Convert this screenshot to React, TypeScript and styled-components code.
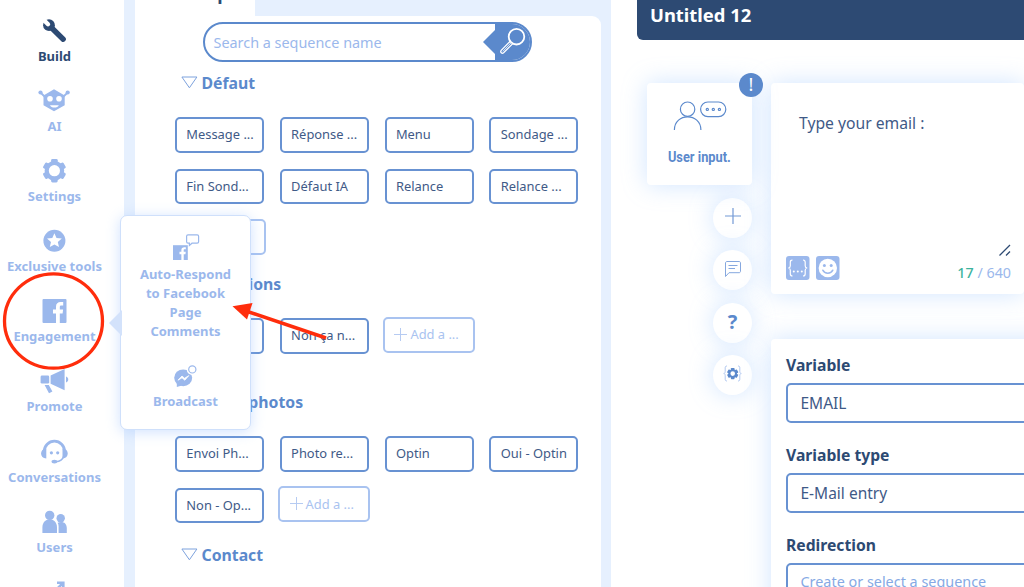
import React from "react";
import styled, { createGlobalStyle, css } from "styled-components";

const c = {
  navy: "#2d4a73",
  text: "#3f5a87",
  blue: "#5b89cc",
  line: "#6892d2",
  soft: "#9bb8ec",
  pale: "#e6f0fe",
  red: "#ff2d0c",
};

const GlobalStyle = createGlobalStyle`
  * { box-sizing: border-box; }
  body { margin: 0; background: #fff; font-family: "Noto Sans", "Open Sans", sans-serif; overflow: hidden; }
`;

const Page = styled.div`
  position: relative;
  display: flex;
  width: 1024px;
  height: 587px;
  overflow: hidden;
  background: #fff;
`;

/* ---------- Sidebar ---------- */

const Sidebar = styled.nav`
  display: flex;
  flex: 0 0 124px;
  flex-direction: column;
  align-items: center;
  padding: 18px 15px 0 0;
`;

const NavItem = styled.a<{ $active?: boolean }>`
  display: flex;
  flex: 0 0 70.1px;
  flex-direction: column;
  align-items: center;
  gap: 5px;
  color: ${(p) => (p.$active ? c.navy : c.soft)};
  font-size: 13px;
  font-weight: 700;
  line-height: 19px;
  white-space: nowrap;
`;

const NavGlyph = styled.svg`
  display: block;
  flex: none;
  width: 32px;
  height: 24px;
  margin-right: 1px;
  overflow: visible;
  fill: currentColor;
`;

/* ---------- Sequences ---------- */

const Sequences = styled.section`
  display: flex;
  flex: 0 0 487px;
  flex-direction: column;
  padding: 0 10.5px;
  background: ${c.pale};
`;

const Tab = styled.div`
  display: flex;
  flex: 0 0 33px;
  align-items: flex-start;
  justify-content: center;
  width: 120px;
  margin-top: -17px;
  padding-right: 7px;
  background: #fff;
  color: ${c.navy};
  font-size: 18px;
  font-weight: 700;
  line-height: 20px;
`;

const Panel = styled.div`
  flex: 1;
  padding: 6px 0 0 40.5px;
  border-radius: 0 9px 0 0;
  background: #fff;
`;

const Search = styled.div`
  display: flex;
  width: 329px;
  height: 39.5px;
  margin-left: 28px;
  overflow: hidden;
  border: 2px solid ${c.blue};
  border-radius: 20px;
`;

const SearchText = styled.span`
  flex: 1;
  padding-left: 8.5px;
  color: ${c.soft};
  font-size: 14.4px;
  line-height: 37px;
`;

const SearchButton = styled.span`
  position: relative;
  flex: 0 0 35px;
  background: ${c.blue};
  &::before {
    content: "";
    position: absolute;
    top: 4.5px;
    left: -12.5px;
    border: 13px solid transparent;
    border-right-color: ${c.blue};
    border-left: 0;
  }
  svg { position: relative; display: block; }
`;

const SectionList = styled.div`
  display: grid;
  grid-template-rows: 201px 118px 153px 44px;
  padding-top: 9.5px;
`;

const SectionHead = styled.h3`
  display: flex;
  align-items: center;
  gap: 4px;
  height: 24px;
  margin: 0 0 22px 5.5px;
  color: ${c.blue};
  font-size: 15.8px;
  font-weight: 700;
  svg { display: block; margin-top: -1px; }
`;

const Chips = styled.div`
  display: grid;
  grid-template-columns: repeat(4, 89px);
  grid-auto-rows: 35.5px;
  gap: 16px 15.8px;
`;

const Chip = styled.div<{ $add?: boolean }>`
  display: flex;
  align-items: center;
  padding: 0 0 1px 9.3px;
  border: 2px solid ${c.line};
  border-radius: 5px;
  color: ${c.text};
  font-size: 12.9px;
  white-space: nowrap;
  ${(p) =>
    p.$add &&
    css`
      width: 92px;
      height: 36px;
      margin: -1.5px 0 0 -1.5px;
      gap: 3px;
      border-color: #a9c3f0;
      color: #a9c3f0;
    `}
`;

/* ---------- Editor ---------- */

const Editor = styled.main`
  display: flex;
  flex: 1;
  flex-direction: column;
  min-width: 0;
`;

const TitleBar = styled.header`
  flex: 0 0 39.5px;
  margin-left: 26px;
  padding-left: 13px;
  border-radius: 0 0 0 6px;
  background: ${c.navy};
  color: #fff;
  font-size: 18.4px;
  font-weight: 700;
  line-height: 30px;
`;

const Workspace = styled.div`
  display: flex;
  gap: 19px;
  padding: 43.5px 0 0 36px;
`;

const Rail = styled.div`
  display: flex;
  flex: 0 0 105px;
  flex-direction: column;
  align-items: flex-end;
  gap: 12.5px;
`;

const glow = css`
  box-shadow: 0 0 24px rgba(140, 190, 255, 0.4);
`;

const InputCard = styled.div`
  position: relative;
  display: flex;
  flex-direction: column;
  align-items: center;
  width: 105px;
  height: 102px;
  padding-top: 17px;
  border-radius: 4px;
  background: #fff;
  ${glow}
`;

const InputLabel = styled.span`
  margin-top: 16px;
  color: ${c.blue};
  font-family: Roboto, sans-serif;
  font-size: 14px;
  font-weight: 700;
  line-height: 18px;
  white-space: nowrap;
  transform: scaleX(0.915);
`;

const Badge = styled.span`
  position: absolute;
  top: -10px;
  right: -11px;
  width: 24px;
  height: 24px;
  border-radius: 50%;
  background: ${c.blue};
  color: #fff;
  font-size: 18px;
  line-height: 23px;
  text-align: center;
`;

const RoundButton = styled.span`
  display: flex;
  align-items: center;
  justify-content: center;
  width: 39px;
  height: 40px;
  padding-bottom: 3px;
  border-radius: 50%;
  background: #fff;
  color: ${c.blue};
  font-size: 20px;
  font-weight: 700;
  ${glow}
`;

const Cards = styled.div`
  display: flex;
  flex: 0 0 253px;
  flex-direction: column;
  gap: 45px;
  min-width: 0;
`;

const MessageCard = styled.div`
  display: flex;
  flex-direction: column;
  justify-content: space-between;
  height: 210.5px;
  padding: 28px 13px 11px 15px;
  border-radius: 4px;
  background: #fff;
  ${glow}
`;

const MessageText = styled.div`
  padding-left: 13px;
  color: ${c.text};
  font-size: 15.7px;
  line-height: 24px;
`;

const MessageFoot = styled.div`
  display: flex;
  align-items: flex-end;
  justify-content: space-between;
`;

const Tools = styled.div`
  display: flex;
  gap: 6px;
  padding-bottom: 3px;
  svg { display: block; }
`;

const CounterBox = styled.div`
  display: flex;
  flex-direction: column;
  align-items: flex-end;
  gap: 7px;
`;

const Counter = styled.span`
  color: ${c.soft};
  font-size: 14.3px;
  line-height: 20px;
  white-space: nowrap;
  b { color: #3db39e; font-weight: 500; }
`;

const FormCard = styled.div`
  display: grid;
  grid-auto-rows: 90px;
  width: 300px;
  padding: 14.5px 15px;
  border-radius: 4px;
  background: #fff;
  ${glow}
`;

const FieldLabel = styled.div`
  height: 24px;
  margin-bottom: 6px;
  color: ${c.navy};
  font-size: 15.7px;
  font-weight: 700;
  line-height: 24px;
`;

const Field = styled.div<{ $empty?: boolean }>`
  height: 40px;
  padding-left: 12.5px;
  border: 2px solid ${c.line};
  border-radius: 5px;
  color: ${(p) => (p.$empty ? "#86a9e4" : c.text)};
  font-size: ${(p) => (p.$empty ? 14.4 : 15.5)}px;
  line-height: ${(p) => (p.$empty ? 34 : 37)}px;
  white-space: nowrap;
`;

/* ---------- Flyout menu ---------- */

const Flyout = styled.div`
  position: absolute;
  top: 215px;
  left: 120px;
  display: flex;
  flex-direction: column;
  align-items: center;
  width: 131px;
  height: 215px;
  padding-top: 17px;
  border: 1.5px solid #cfe0fb;
  border-radius: 7px;
  background: #fff;
  box-shadow: 0 2px 14px rgba(150, 190, 255, 0.45);
  &::before {
    content: "";
    position: absolute;
    top: 94px;
    left: -12px;
    border: 13.5px solid transparent;
    border-right: 13px solid #d3e2fb;
    border-left: 0;
  }
`;

const FlyoutItem = styled.div`
  display: flex;
  flex-direction: column;
  align-items: center;
  width: 104px;
  margin-bottom: 23px;
  color: ${c.soft};
  font-size: 13px;
  font-weight: 700;
  line-height: 19px;
  text-align: center;
  svg { display: block; margin-bottom: 3px; }
`;

const Annotations = styled.svg`
  position: absolute;
  top: 0;
  left: 0;
  pointer-events: none;
`;

/* ---------- Icons ---------- */

const WrenchIcon = () => (
  <NavGlyph viewBox="0 0 32 24">
    <path d="m12 8.300 13.200 12.900" stroke="currentColor" strokeWidth="5.400" strokeLinecap="round" />
    <circle cx="11" cy="7.200" r="5.900" />
    <path d="m4.500.700 5.500 5.500" stroke="#fff" strokeWidth="4.400" strokeLinecap="round" />
  </NavGlyph>
);

const RobotIcon = () => (
  <NavGlyph viewBox="0 0 32 24">
    <path d="M16 1.300 26.700 7.500v9.800L16 23.300 5.500 17.300V7.500z" />
    <path d="M2.500 4.500 7 9M29.700 4.500 25 9" stroke="currentColor" strokeWidth="1.800" />
    <circle cx="2.500" cy="4.500" r="2.100" />
    <circle cx="29.700" cy="4.500" r="2.100" />
    <g fill="#fff">
      <circle cx="12" cy="10.800" r="2.800" />
      <circle cx="21" cy="10.800" r="2.800" />
      <path d="M12 17.200h8.800c-1 3.200-7.800 3.200-8.800 0z" />
    </g>
  </NavGlyph>
);

const GearIcon = () => (
  <NavGlyph viewBox="0 0 32 24">
    {[0, 60, 120].map((a) => (
      <rect key={a} x="13.100" y="0.900" width="6.600" height="23.600" rx="1.400" transform={`rotate(${a} 16.400 12.700)`} />
    ))}
    <circle cx="16.400" cy="12.700" r="9.800" />
    <circle cx="16.400" cy="12.700" r="5.600" fill="#fff" />
  </NavGlyph>
);

const StarIcon = () => (
  <NavGlyph viewBox="0 0 32 24">
    <circle cx="16.400" cy="12.700" r="11" />
    <path fill="#fff" d="m16.400 5.200 2.100 4.800 5.300.5-4 3.500 1.200 5.100-4.600-2.700-4.600 2.700 1.200-5.100-4-3.500 5.300-.5z" />
  </NavGlyph>
);

const fLetter =
  "M18 25v-9.600h-3v-3.900h3V8.700c0-3 1.900-4.600 4.600-4.600h2.600v3.500h-1.900c-1.200 0-1.500.6-1.500 1.600v2.300h3.300l-.5 3.900h-2.800V25z";

const FacebookIcon = () => (
  <NavGlyph viewBox="0 0 32 24">
    <rect x="4.500" y="1" width="24" height="24" rx="1" />
    <path fill="#fff" d={fLetter} />
  </NavGlyph>
);

const MegaphoneIcon = () => (
  <NavGlyph viewBox="0 0 32 24">
    <rect x="2.600" y="7.600" width="8.600" height="8" rx="1.400" />
    <path d="m12.600 7.600 14-6.600v21.200l-14-6.400zM28 8.600c3 .8 3 5.200 0 6zM6.600 17h4.200l3.600 6.400-3.400 1.800z" />
  </NavGlyph>
);

const HeadsetIcon = () => (
  <NavGlyph viewBox="0 0 32 24">
    <path d="M6.200 12.500a10.200 10.400 0 0 1 20.400 0" fill="none" stroke="currentColor" strokeWidth="2.800" />
    <path d="M8.300 9.400v10c-7 0-7-10 0-10zM24.500 9.400v10c7 0 7-10 0-10z" />
    <path d="M25.800 17c-1 3.400-4 5.500-8 5.700" fill="none" stroke="currentColor" strokeWidth="1.500" />
    <ellipse cx="16.400" cy="22.600" rx="2.900" ry="1.900" />
    <circle cx="13.400" cy="13.800" r="1.600" />
    <circle cx="19.700" cy="13.800" r="1.600" />
  </NavGlyph>
);

const UsersIcon = () => (
  <NavGlyph viewBox="0 0 32 24">
    <circle cx="11.700" cy="6.400" r="4.700" />
    <path d="M4.400 24v-5.500c0-11 14.600-11 14.600 0V24z" />
    <circle cx="22.700" cy="9.300" r="4.200" />
    <path d="M20.600 24v-6.500c0-1.400-.3-2.700-1-3.800 4.600-2 9.200-.2 9.200 5.300v5z" />
  </NavGlyph>
);

const TrendIcon = () => (
  <NavGlyph viewBox="0 0 32 24">
    <path d="M19 3.700h6.300v6.300M25 4 12 17" fill="none" stroke="currentColor" strokeWidth="2.600" />
  </NavGlyph>
);

const SearchIcon = () => (
  <svg width="35" height="36" viewBox="0 0 35 36" fill="none" stroke="#fff">
    <circle cx="21.500" cy="12.700" r="7.800" strokeWidth="1.800" />
    <path d="m15.200 17.200-9 9.200c-1.400 2 .8 3.700 2.400 2.400l9.200-9.200" strokeWidth="1.300" />
    <path d="m7.800 27.400 8.200-8.600" strokeWidth=".8" />
  </svg>
);

const Triangle = () => (
  <svg width="17" height="13" viewBox="0 0 17 13" fill="none" stroke="#7da2dd">
    <path d="M.9 1h15L8.400 11.800z" />
  </svg>
);

const Plus = ({ size = 13, color = "#b4caf2" }: { size?: number; color?: string }) => (
  <svg width={size} height={size} viewBox="0 0 16 16" stroke={color} strokeWidth="1.200">
    <path d="M8 0v16M0 8h16" />
  </svg>
);

const UserInputIcon = () => (
  <svg width="54" height="32" viewBox="673 100 54 32" fill="none" stroke={c.blue} strokeWidth="1.200">
    <circle cx="687.600" cy="109.200" r="7.200" />
    <path d="M674.400 130c0-17.500 26.500-17.500 26.500 0" />
    <rect x="700.600" y="102" width="25.200" height="14.600" rx="7.300" />
    <circle cx="707.300" cy="109.400" r="1.100" />
    <circle cx="713.300" cy="109.400" r="1.100" />
    <circle cx="719.400" cy="109.400" r="1.100" />
  </svg>
);

const CommentIcon = () => (
  <svg width="18" height="18" viewBox="0 0 18 18" fill="none" stroke="#86a8df" strokeWidth="1">
    <path d="M1.500 16.500V3c0-1 .7-1.500 1.500-1.500h12c1 0 1.500.6 1.500 1.500v8.200c0 1-.6 1.500-1.500 1.500H5zM4.500 5.500h9M4.500 8.500h6.500" />
  </svg>
);

const BraceGearIcon = () => (
  <svg width="19" height="17" viewBox="0 0 19 17" fill="none">
    <path
      d="M4 1C2.400 1 2.200 1.800 2.200 3v3.300c0 1.300-.3 1.900-1.400 2.200 1.100.3 1.400.9 1.400 2.200V14c0 1.200.2 2 1.800 2M15 1c1.600 0 1.800.8 1.800 2v3.300c0 1.300.3 1.900 1.400 2.200-1.100.3-1.400.9-1.400 2.200V14c0 1.200-.2 2-1.800 2"
      stroke="#a9c3ee"
      strokeWidth=".9"
    />
    <g fill={c.blue}>
      {[0, 60, 120].map((a) => (
        <rect key={a} x="7.900" y="3" width="3.600" height="11.200" rx=".6" transform={`rotate(${a} 9.700 8.600)`} />
      ))}
    </g>
    <circle cx="9.700" cy="8.600" r="3.300" stroke={c.blue} strokeWidth="2" fill="#fff" />
  </svg>
);

const BracesIcon = () => (
  <svg width="24" height="24" viewBox="0 0 24 24" fill="none">
    <rect width="23.500" height="24" rx="3" fill={c.soft} />
    <path
      d="M6.500 4C4.500 4 4.300 4.800 4.300 6.300v3.400c0 1.400-.5 2-1.900 2.300 1.400.3 1.900.9 1.900 2.300v3.400c0 1.500.2 2.300 2.200 2.300M17 4c2 0 2.200.8 2.200 2.300v3.400c0 1.400.5 2 1.900 2.300-1.400.3-1.900.9-1.900 2.300v3.400c0 1.500-.2 2.300-2.200 2.300"
      stroke="#fff"
      strokeWidth="1.200"
    />
    <g fill="#fff">
      <circle cx="7.800" cy="15.400" r="1" />
      <circle cx="11.800" cy="15.400" r="1" />
      <circle cx="15.800" cy="15.400" r="1" />
    </g>
  </svg>
);

const SmileIcon = () => (
  <svg width="24" height="24" viewBox="0 0 24 24" fill={c.soft}>
    <rect width="23.500" height="24" rx="3" />
    <circle cx="11.800" cy="12" r="9.200" fill="#fff" />
    <circle cx="8.400" cy="9.600" r="1.500" />
    <circle cx="15.200" cy="9.600" r="1.500" />
    <path d="M6.800 14.200c2 4 8 4 10 0" fill="none" stroke={c.soft} strokeWidth="1.500" strokeLinecap="round" />
  </svg>
);

const ResizeMark = () => (
  <svg width="12" height="12" viewBox="0 0 12 12" stroke={c.navy} strokeWidth="1.300">
    <path d="M.5 11.500 11 1M7 11.500 11 7.500" />
  </svg>
);

const AutoRespondIcon = () => (
  <svg width="28" height="29" viewBox="172 233 28 29" fill="currentColor">
    <rect x="173" y="245.200" width="14.800" height="14.800" />
    <g transform="translate(170.200 244.600) scale(.62)">
      <path fill="#fff" d={fLetter} />
    </g>
    <path
      d="M188 234.800h9.200c.9 0 1.400.5 1.400 1.400v5.600c0 .9-.5 1.400-1.400 1.400h-5.200l-2.600 2.300v-2.300H188c-.9 0-1.400-.5-1.400-1.400v-5.600c0-.9.5-1.400 1.400-1.400z"
      fill="#fff"
      stroke="currentColor"
      strokeWidth="1.200"
    />
  </svg>
);

const BroadcastIcon = () => (
  <svg width="28" height="25" viewBox="172 363 28 25" fill="currentColor">
    <ellipse cx="183.200" cy="376.800" rx="9" ry="8.400" />
    <path d="M176.800 381v5l5-1.600z" />
    <path d="m178 379.200 4-4.200 2.600 2.300 4.200-2.700-4 4.600-2.800-2.400z" fill="#fff" stroke="#fff" strokeWidth=".8" />
    <circle cx="192.300" cy="368.400" r="5.600" fill="#fff" />
    <circle cx="192.300" cy="368.400" r="3.600" fill="#fff" stroke="currentColor" strokeWidth="1.200" />
  </svg>
);

/* ---------- Content ---------- */

const navItems: { label: string; icon: React.ReactNode; active?: boolean }[] = [
  { label: "Build", icon: <WrenchIcon />, active: true },
  { label: "AI", icon: <RobotIcon /> },
  { label: "Settings", icon: <GearIcon /> },
  { label: "Exclusive tools", icon: <StarIcon /> },
  { label: "Engagement", icon: <FacebookIcon /> },
  { label: "Promote", icon: <MegaphoneIcon /> },
  { label: "Conversations", icon: <HeadsetIcon /> },
  { label: "Users", icon: <UsersIcon /> },
  { label: "", icon: <TrendIcon /> },
];

const ADD = "Add a ...";

const sections = [
  {
    title: "Défaut",
    chips: ["Message ...", "Réponse ...", "Menu", "Sondage ...", "Fin Sond...", "Défaut IA", "Relance", "Relance ...", ADD],
  },
  { title: "Questions", chips: ["Oui ça ...", "Non ça n...", ADD] },
  { title: "Envoi photos", chips: ["Envoi Ph...", "Photo re...", "Optin", "Oui - Optin", "Non - Op...", ADD] },
  { title: "Contact", chips: [] },
];

export default function App() {
  return (
    <Page>
      <GlobalStyle />
      <Sidebar>
        {navItems.map((item, i) => (
          <NavItem key={i} $active={item.active}>
            {item.icon}
            {item.label}
          </NavItem>
        ))}
      </Sidebar>

      <Sequences>
        <Tab>Bot map</Tab>
        <Panel>
          <Search>
            <SearchText>Search a sequence name</SearchText>
            <SearchButton>
              <SearchIcon />
            </SearchButton>
          </Search>
          <SectionList>
            {sections.map((s) => (
              <div key={s.title}>
                <SectionHead>
                  <Triangle />
                  {s.title}
                </SectionHead>
                <Chips>
                  {s.chips.map((label, i) => (
                    <Chip key={i} $add={label === ADD}>
                      {label === ADD && <Plus />}
                      {label}
                    </Chip>
                  ))}
                </Chips>
              </div>
            ))}
          </SectionList>
        </Panel>
      </Sequences>

      <Editor>
        <TitleBar>Untitled 12</TitleBar>
        <Workspace>
          <Rail>
            <InputCard>
              <UserInputIcon />
              <InputLabel>User input.</InputLabel>
              <Badge>!</Badge>
            </InputCard>
            <RoundButton>
              <Plus size={16} color="#7399d6" />
            </RoundButton>
            <RoundButton>
              <CommentIcon />
            </RoundButton>
            <RoundButton>?</RoundButton>
            <RoundButton>
              <BraceGearIcon />
            </RoundButton>
          </Rail>
          <Cards>
            <MessageCard>
              <MessageText>Type your email :</MessageText>
              <MessageFoot>
                <Tools>
                  <BracesIcon />
                  <SmileIcon />
                </Tools>
                <CounterBox>
                  <ResizeMark />
                  <Counter>
                    <b>17</b> / 640
                  </Counter>
                </CounterBox>
              </MessageFoot>
            </MessageCard>
            <FormCard>
              <div>
                <FieldLabel>Variable</FieldLabel>
                <Field>EMAIL</Field>
              </div>
              <div>
                <FieldLabel>Variable type</FieldLabel>
                <Field>E-Mail entry</Field>
              </div>
              <div>
                <FieldLabel>Redirection</FieldLabel>
                <Field $empty>Create or select a sequence</Field>
              </div>
            </FormCard>
          </Cards>
        </Workspace>
      </Editor>

      <Flyout>
        <FlyoutItem>
          <AutoRespondIcon />
          Auto-Respond to Facebook Page Comments
        </FlyoutItem>
        <FlyoutItem>
          <BroadcastIcon />
          Broadcast
        </FlyoutItem>
      </Flyout>

      <Annotations width="1024" height="587">
        <ellipse cx="53.500" cy="321" rx="49" ry="47.200" fill="none" stroke={c.red} strokeWidth="3.300" />
        <path d="M326 338 246 311" stroke={c.red} strokeWidth="3.500" />
        <path d="m232.500 306.300 20-3.300-5.500 16.500z" fill={c.red} />
      </Annotations>
    </Page>
  );
}
